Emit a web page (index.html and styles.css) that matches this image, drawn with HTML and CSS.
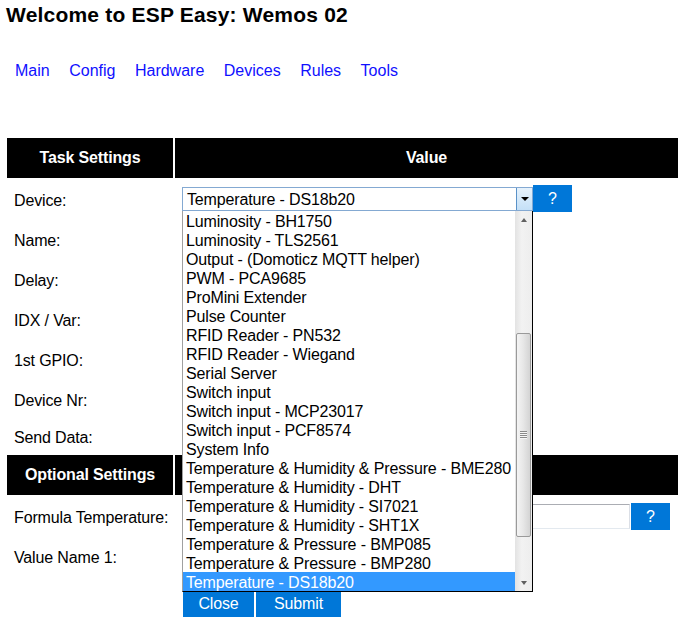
FILE: index.html
```html
<!DOCTYPE html>
<html>
<head>
<meta charset="utf-8">
<title>ESP Easy</title>
<link rel="stylesheet" href="styles.css">
</head>
<body>
<h1 class="title">Welcome to ESP Easy: Wemos 02</h1>
<nav class="menu">
  <a href="#">Main</a>
  <a href="#">Config</a>
  <a href="#">Hardware</a>
  <a href="#">Devices</a>
  <a href="#">Rules</a>
  <a href="#">Tools</a>
</nav>
<div class="table">
  <div class="hcell">Task Settings</div>
  <div class="hcell">Value</div>

  <div class="label">Device:</div>
  <div class="value">
    <div class="ctrl ctrl-device">
      <div class="selwrap">
        <div class="select">
          <span class="seltext">Temperature - DS18b20</span>
          <span class="selarrow"><span class="tri-down"></span></span>
        </div>
        <div class="droplist">
          <ul class="options">
            <li>Luminosity - BH1750</li>
            <li>Luminosity - TLS2561</li>
            <li>Output - (Domoticz MQTT helper)</li>
            <li>PWM - PCA9685</li>
            <li>ProMini Extender</li>
            <li>Pulse Counter</li>
            <li>RFID Reader - PN532</li>
            <li>RFID Reader - Wiegand</li>
            <li>Serial Server</li>
            <li>Switch input</li>
            <li>Switch input - MCP23017</li>
            <li>Switch input - PCF8574</li>
            <li>System Info</li>
            <li>Temperature &amp; Humidity &amp; Pressure - BME280</li>
            <li>Temperature &amp; Humidity - DHT</li>
            <li>Temperature &amp; Humidity - SI7021</li>
            <li>Temperature &amp; Humidity - SHT1X</li>
            <li>Temperature &amp; Pressure - BMP085</li>
            <li>Temperature &amp; Pressure - BMP280</li>
            <li class="selected">Temperature - DS18b20</li>
          </ul>
          <div class="scrollbar">
            <div class="sb-btn"><span class="sb-up"></span></div>
            <div class="sb-track">
              <div class="sb-thumb">
                <span class="grip"></span>
              </div>
            </div>
            <div class="sb-btn"><span class="sb-down"></span></div>
          </div>
        </div>
      </div>
      <span class="qbtn">?</span>
    </div>
  </div>

  <div class="label">Name:</div>
  <div class="value"></div>
  <div class="label">Delay:</div>
  <div class="value"></div>
  <div class="label">IDX / Var:</div>
  <div class="value"></div>
  <div class="label">1st GPIO:</div>
  <div class="value"></div>
  <div class="label">Device Nr:</div>
  <div class="value"></div>
  <div class="label label-short">Send Data:</div>
  <div class="value"></div>

  <div class="hcell">Optional Settings</div>
  <div class="hcell"></div>

  <div class="label">Formula Temperature:</div>
  <div class="value">
    <div class="ctrl ctrl-formula">
      <span class="input"></span>
      <span class="qbtn">?</span>
    </div>
  </div>
  <div class="label">Value Name 1:</div>
  <div class="value"></div>

  <div class="label"></div>
  <div class="value">
    <div class="actions">
      <span class="btn btn-close">Close</span>
      <span class="btn btn-submit">Submit</span>
    </div>
  </div>
</div>
</body>
</html>
```

FILE: styles.css
```css
html, body {
  margin: 0;
  padding: 0;
  background: #fff;
}

body {
  font-family: "Liberation Sans", Arial, sans-serif;
  font-size: 16px;
  letter-spacing: -0.14px;
  color: #000;
}

.title {
  margin: 0;
  padding: 3px 0 0 6px;
  font-size: 21px;
  line-height: 24px;
  letter-spacing: 0.2px;
  font-weight: bold;
}

.menu {
  display: flex;
  gap: 19.5px;
  padding: 34px 0 0 15px;
  height: 19px;
  line-height: 19px;
  letter-spacing: 0;
}

.menu a {
  color: #1010ff;
  text-decoration: none;
}

.table {
  display: grid;
  grid-template-columns: 166px 503px;
  grid-template-rows: 40px 38px 38px 38px 38px 38px 38px 33px 40px 38px 38px 40px;
  column-gap: 2px;
  row-gap: 2px;
  margin: 58px 0 0 7px;
}

.hcell {
  background: #000;
  color: #fff;
  font-weight: bold;
  display: flex;
  align-items: center;
  justify-content: center;
}

.label {
  padding: 12px 0 0 7px;
  line-height: 18px;
  white-space: nowrap;
}

.label-short {
  padding-top: 9px;
}

.value {
  position: relative;
  padding-left: 7px;
}

.ctrl {
  display: flex;
  align-items: center;
  height: 27px;
}

.ctrl-device {
  margin-top: 5px;
  align-items: flex-start;
}

.ctrl-formula {
  margin-top: 6px;
}

.selwrap {
  position: relative;
  width: 351px;
  margin-top: 2px;
}

.select {
  box-sizing: border-box;
  height: 24px;
  border: 1px solid #84a9d2;
  display: flex;
  align-items: stretch;
  background: #fff;
}

.seltext {
  flex: 1;
  padding: 3px 0 0 4px;
  line-height: 17px;
}

.selarrow {
  width: 16px;
  box-sizing: border-box;
  border-left: 1px solid #5a92c8;
  background: linear-gradient(#e6f2fc, #c4e0f7);
  display: flex;
  align-items: center;
  justify-content: center;
}

.tri-down {
  width: 0;
  height: 0;
  border-left: 4px solid transparent;
  border-right: 4px solid transparent;
  border-top: 4px solid #000;
}

.droplist {
  position: absolute;
  left: 0;
  top: 100%;
  z-index: 10;
  box-sizing: border-box;
  width: 351px;
  background: #fff;
  border-left: 1px solid #a0a0a0;
  border-right: 1px solid #000;
  border-bottom: 1px solid #000;
  display: flex;
}

.options {
  list-style: none;
  margin: 0;
  padding: 0;
  flex: 1;
}

.options li {
  height: 19px;
  box-sizing: border-box;
  padding: 2px 0 0 3px;
  line-height: 17px;
  white-space: nowrap;
  overflow: hidden;
}

.options li.selected {
  background: #3399ff;
  color: #fff;
}

.scrollbar {
  width: 17px;
  display: flex;
  flex-direction: column;
  background: linear-gradient(90deg, #e3e3e3, #f2f2f2 40%, #ededed);
}

.sb-btn {
  height: 17px;
  display: flex;
  align-items: center;
  justify-content: center;
}

.sb-up {
  width: 0;
  height: 0;
  border-left: 3.5px solid transparent;
  border-right: 3.5px solid transparent;
  border-bottom: 4px solid #606060;
}

.sb-down {
  width: 0;
  height: 0;
  border-left: 3.5px solid transparent;
  border-right: 3.5px solid transparent;
  border-top: 4px solid #606060;
}

.sb-track {
  flex: 1;
}

.sb-thumb {
  box-sizing: border-box;
  margin: 105px 1px 0 1px;
  height: 204px;
  border: 1px solid #9a9a9a;
  border-radius: 2px;
  background: linear-gradient(90deg, #f4f4f4, #e8e8e8 45%, #d4d4d4);
  display: flex;
  align-items: center;
  justify-content: center;
}

.grip {
  width: 7px;
  height: 8px;
  background: repeating-linear-gradient(#8a8a8a 0 1px, #f6f6f6 1px 2px);
}

.qbtn {
  box-sizing: border-box;
  width: 39px;
  height: 27px;
  background: #0077d8;
  color: #fff;
  text-align: center;
  padding-top: 5px;
  line-height: 18px;
}

.input {
  box-sizing: border-box;
  width: 448px;
  height: 25px;
  border: 1px solid #dbdfe6;
  border-top-color: #abadb3;
  border-bottom-color: #e3e9ef;
  background: #fff;
  margin-right: 1px;
}

.actions {
  display: flex;
  align-items: flex-start;
  gap: 2px;
  margin: 14px 0 0 1px;
}

.btn {
  box-sizing: border-box;
  background: #0077d8;
  color: #fff;
  padding-top: 4px;
  line-height: 18px;
  text-align: center;
}

.btn-close {
  width: 71px;
  height: 26px;
}

.btn-submit {
  width: 85px;
  height: 27px;
}
```
